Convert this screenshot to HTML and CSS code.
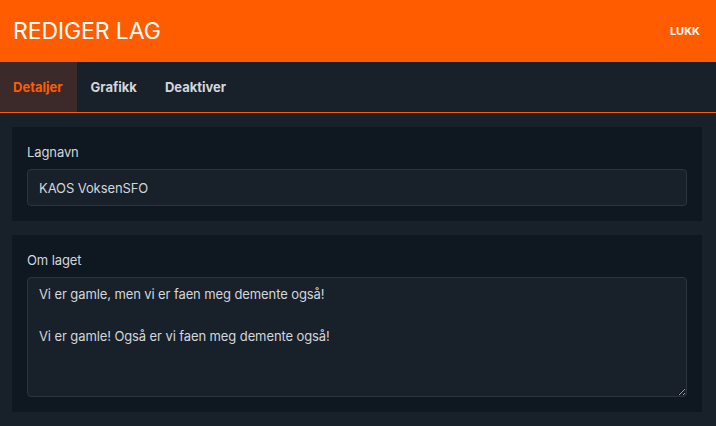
FILE: index.html
```html
<!DOCTYPE html>
<html lang="no">
<head>
<meta charset="utf-8">
<title>Rediger lag</title>
<link rel="stylesheet" href="styles.css">
</head>
<body>
<header class="topbar">
  <h1 class="title">REDIGER LAG</h1>
  <button class="close">LUKK</button>
</header>
<nav class="tabs">
  <a class="tab active">Detaljer</a>
  <a class="tab">Grafikk</a>
  <a class="tab">Deaktiver</a>
</nav>
<main class="content">
  <section class="card">
    <label class="label" for="name">Lagnavn</label>
    <input id="name" class="field" type="text" value="KAOS VoksenSFO">
  </section>
  <section class="card">
    <label class="label" for="about">Om laget</label>
    <textarea id="about" class="field area">Vi er gamle, men vi er faen meg demente også!

Vi er gamle! Også er vi faen meg demente også!</textarea>
  </section>
</main>
</body>
</html>
```
FILE: styles.css
```css
* { box-sizing: border-box; }
html, body { margin: 0; padding: 0; }
body {
  background: #18202a;
  font-family: Inter, "Noto Sans", sans-serif;
  color: #d3d7dc;
  width: 716px;
  height: 426px;
  overflow: hidden;
}
.topbar {
  height: 62px;
  background: #ff5c00;
  display: flex;
  align-items: center;
  justify-content: space-between;
  padding: 0 16px 0 13px;
}
.title {
  margin: 0;
  font-size: 23px;
  font-weight: 400;
  color: #ffffff;
  letter-spacing: -0.1px;
}
.close {
  background: none;
  border: none;
  padding: 0;
  color: #ffffff;
  font-family: inherit;
  font-weight: 700;
  font-size: 11px;
}
.tabs {
  height: 51px;
  display: flex;
  border-bottom: 1px solid #ff5c00;
}
.tab {
  display: flex;
  align-items: center;
  padding: 0 14px 0 14px;
  font-size: 13px;
  font-weight: 700;
  color: #d3d7dc;
}
.tab.active {
  background: #3b2a29;
  color: #ff5c00;
  padding-left: 13px;
}
.content {
  padding: 14px 14px 0 12px;
  display: flex;
  flex-direction: column;
  gap: 14px;
}
.card {
  background: #0f1720;
  padding: 15px;
  display: flex;
  flex-direction: column;
}
.label {
  font-size: 13px;
  line-height: 20px;
  margin-bottom: 7px;
  color: #d3d7dc;
  letter-spacing: -0.1px;
}
.field {
  background: #18202a;
  border: 1px solid #2c353f;
  border-radius: 4px;
  color: #d3d7dc;
  font-family: inherit;
  font-size: 13px;
  letter-spacing: -0.1px;
  height: 37px;
  padding: 0 11px;
  outline: none;
  color-scheme: dark;
}
.area {
  height: 120px;
  padding: 6px 11px;
  line-height: 21px;
  resize: vertical;
}
```
